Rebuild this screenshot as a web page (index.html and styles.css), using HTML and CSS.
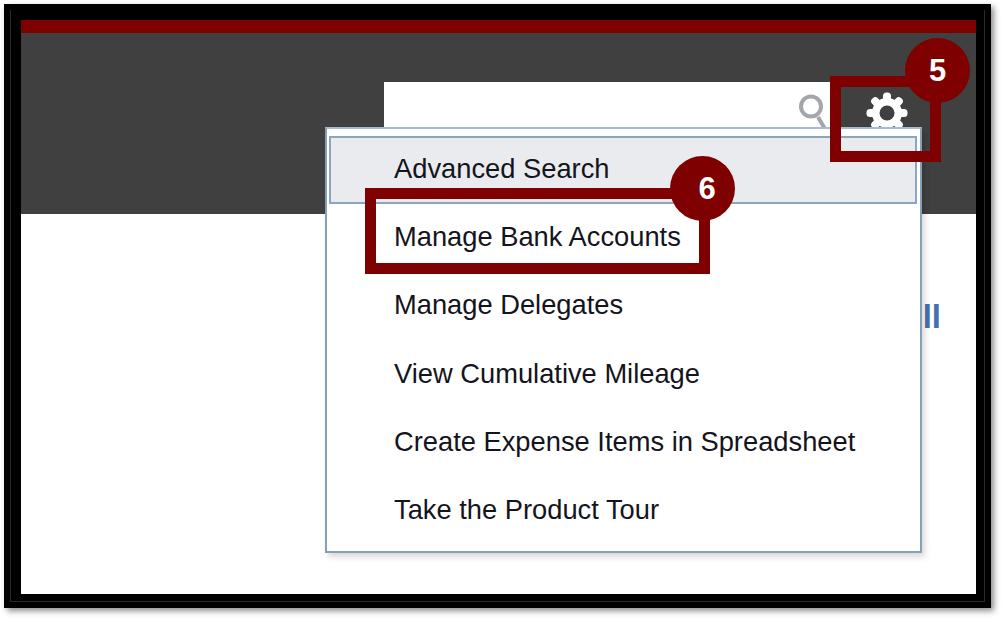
FILE: index.html
```html
<!DOCTYPE html>
<html lang="en">
<head>
    <meta charset="UTF-8">
    <meta name="viewport" content="width=device-width, initial-scale=1.0">
    <title>Manage Bank Accounts</title>
    <link rel="stylesheet" href="styles.css">
</head>
<body>
    <div class="frame">
        <div class="inner-line">
            <div class="screen">
                <div class="top-stripe"></div>
                <header class="header">
                    <div class="search">
                        <svg class="search-icon" viewBox="0 0 34 40" width="34" height="40">
                            <circle cx="16" cy="12.5" r="10" fill="none" stroke="#a3a7aa" stroke-width="4"/>
                            <path d="M23 23 L30 35" stroke="#a3a7aa" stroke-width="4" fill="none"/>
                        </svg>
                    </div>
                    <svg class="gear" viewBox="-22 -22 44 44" width="44" height="44">
                        <g fill="#fff">
                            <circle r="15"/>
                            <rect x="-4" y="-20.5" width="8" height="10" rx="3.5"/>
                            <rect x="-4" y="-20.5" width="8" height="10" rx="3.5" transform="rotate(45)"/>
                            <rect x="-4" y="-20.5" width="8" height="10" rx="3.5" transform="rotate(90)"/>
                            <rect x="-4" y="-20.5" width="8" height="10" rx="3.5" transform="rotate(135)"/>
                            <rect x="-4" y="-20.5" width="8" height="10" rx="3.5" transform="rotate(180)"/>
                            <rect x="-4" y="-20.5" width="8" height="10" rx="3.5" transform="rotate(225)"/>
                            <rect x="-4" y="-20.5" width="8" height="10" rx="3.5" transform="rotate(270)"/>
                            <rect x="-4" y="-20.5" width="8" height="10" rx="3.5" transform="rotate(315)"/>
                        </g>
                        <circle r="7.5" fill="#404040"/>
                    </svg>
                </header>
                <main class="content">
                    <a class="all-link">All</a>
                </main>

                <ul class="menu">
                    <li class="menu-item active">Advanced Search</li>
                    <li class="menu-item">Manage Bank Accounts</li>
                    <li class="menu-item">Manage Delegates</li>
                    <li class="menu-item">View Cumulative Mileage</li>
                    <li class="menu-item">Create Expense Items in Spreadsheet</li>
                    <li class="menu-item">Take the Product Tour</li>
                </ul>

                <div class="callout-box box-gear"></div>
                <div class="callout-num num-gear">5</div>
                <div class="callout-box box-bank"></div>
                <div class="callout-num num-bank">6</div>
            </div>
        </div>
    </div>
</body>
</html>
```

FILE: styles.css
```css
html, body {
    height: 100%;
}
body {
    margin: 0;
    background: #fff;
    font-family: 'Liberation Sans', Arial, sans-serif;
    overflow: hidden;
}
.frame {
    box-sizing: border-box;
    width: 987px;
    height: 604px;
    margin: 4px 0 0 4px;
    padding: 6px;
    background: #000;
    box-shadow: 3px 3px 6px rgba(0, 0, 0, 0.45);
}
.inner-line {
    box-sizing: border-box;
    width: 100%;
    height: 100%;
    padding: 10px 8px 7px 10px;
    border-left: 1px solid #2a2a2a;
    border-right: 1px solid #2a2a2a;
    border-bottom: 1px solid #2a2a2a;
}
.screen {
    position: relative;
    height: 100%;
    background: #fff;
}
.top-stripe {
    height: 13px;
    background: #7f0000;
}
.header {
    display: flex;
    align-items: flex-start;
    height: 181px;
    padding: 49px 0 0 363px;
    box-sizing: border-box;
    background: #404040;
}
.search {
    display: flex;
    justify-content: flex-end;
    box-sizing: border-box;
    width: 448px;
    height: 70px;
    padding: 12px 3px 0 0;
    background: #fff;
}
.gear {
    margin: 9px 0 0 33px;
}
.content {
    display: flex;
    justify-content: flex-end;
    padding: 84px 35px 0 0;
}
.all-link {
    color: #4470b0;
    font-size: 33px;
    font-weight: bold;
}
.menu {
    position: absolute;
    left: 304px;
    top: 107px;
    box-sizing: border-box;
    width: 597px;
    height: 426px;
    margin: 0;
    padding: 7px 3px 0 2px;
    list-style: none;
    background: #fff;
    border: 2px solid #86a0b8;
    border-top-color: #a9bccd;
    box-shadow: 3px 4px 6px rgba(0, 0, 0, 0.15);
}
.menu-item {
    display: flex;
    align-items: center;
    box-sizing: border-box;
    height: 68.2px;
    padding: 0 0 2px 65px;
    color: #14141c;
    font-size: 27.3px;
}
.menu-item.active {
    background: #e9ebee;
    border: 2px solid #8ba5bd;
    padding-left: 63px;
}
.callout-box {
    position: absolute;
    box-sizing: border-box;
    border: 11.5px solid #7f0000;
}
.box-gear {
    left: 809px;
    top: 56px;
    width: 111px;
    height: 86px;
}
.box-bank {
    left: 344px;
    top: 168px;
    width: 345px;
    height: 86px;
}
.callout-num {
    position: absolute;
    display: flex;
    align-items: center;
    justify-content: center;
    box-sizing: border-box;
    width: 65px;
    height: 65px;
    border-radius: 50%;
    background: #7f0000;
    color: #fff;
    font-size: 31px;
    font-weight: bold;
}
.num-gear {
    left: 884px;
    top: 18px;
}
.num-bank {
    left: 649px;
    top: 136px;
    padding-left: 9px;
}
```
